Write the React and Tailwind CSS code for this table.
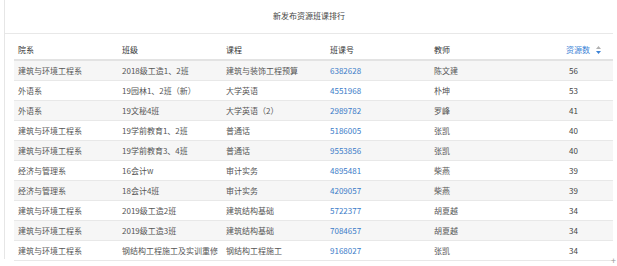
const ROWS = [
  ['建筑与环境工程系', '2018级工造1、2班', '建筑与装饰工程预算', '6382628', '陈文建', 56],
  ['外语系', '19园林1、2班（新）', '大学英语', '4551968', '朴坤', 53],
  ['外语系', '19文秘4班', '大学英语（2）', '2989782', '罗峰', 41],
  ['建筑与环境工程系', '19学前教育1、2班', '普通话', '5186005', '张凯', 40],
  ['建筑与环境工程系', '19学前教育3、4班', '普通话', '9553856', '张凯', 40],
  ['经济与管理系', '16会计w', '审计实务', '4895481', '柴燕', 39],
  ['经济与管理系', '18会计4班', '审计实务', '4209057', '柴燕', 39],
  ['建筑与环境工程系', '2019级工造2班', '建筑结构基础', '5722377', '胡夏越', 34],
  ['建筑与环境工程系', '2019级工造3班', '建筑结构基础', '7084657', '胡夏越', 34],
  ['建筑与环境工程系', '钢结构工程施工及实训重修', '钢结构工程施工', '9168027', '张凯', 34],
];

const cols = 'grid grid-cols-[104px_104px_104px_104px_104px_1fr]';

export default function App() {
  return (
    <div
      className="relative w-[617px] h-[266px] bg-white text-[8px] text-[#555]"
      style={{ fontFamily: '"Noto Sans CJK SC", "Noto Sans", sans-serif' }}
    >
      <div className="ml-[4px] h-[259px] border-l border-[#e6e6e6] pr-[4px]">
        {/* title */}
        <div className="h-[34px] flex items-center justify-center border-b border-[#e8e8e8] text-[#444] pb-[1px]">
          新发布资源班课排行
        </div>

        <div className="ml-[9px] mt-[6px]">
          {/* header */}
          <div className={`${cols} h-[21px] items-center border-b-2 border-[#e3e3e3] text-[#333]`}>
            <div className="pl-[4px]">院系</div>
            <div className="pl-[4px]">班级</div>
            <div className="pl-[4px]">课程</div>
            <div className="pl-[4px]">班课号</div>
            <div className="pl-[4px]">教师</div>
            <div className="flex items-center justify-center pl-[20px] gap-[6px] text-[#3b82d6]">
              <span>资源数</span>
              <svg width="5" height="8" viewBox="0 0 5 8">
                <path d="M2.5 0 L5 3 L0 3 Z" fill="#b0b0b0" />
                <path d="M0 5 L5 5 L2.5 8 Z" fill="#3b82d6" />
              </svg>
            </div>
          </div>

          {ROWS.map((r, i) => (
            <div
              key={r[3]}
              className={`${cols} h-[20px] items-center border-b border-[#e8e8e8] ${
                i % 2 === 0 ? 'bg-[#f6f6f6]' : 'bg-white'
              }`}
            >
              <div className="pl-[4px] whitespace-nowrap">{r[0]}</div>
              <div className="pl-[4px] whitespace-nowrap">{r[1]}</div>
              <div className="pl-[4px] whitespace-nowrap">{r[2]}</div>
              <div className="pl-[4px] text-[#3a7bc8]">{r[3]}</div>
              <div className="pl-[4px]">{r[4]}</div>
              <div className="text-center pl-[0px] text-[#444]">{r[5]}</div>
            </div>
          ))}
        </div>
      </div>
      <span className="absolute right-[1px] bottom-[1px] text-[9px] leading-none text-[#999]">+</span>
    </div>
  );
}
